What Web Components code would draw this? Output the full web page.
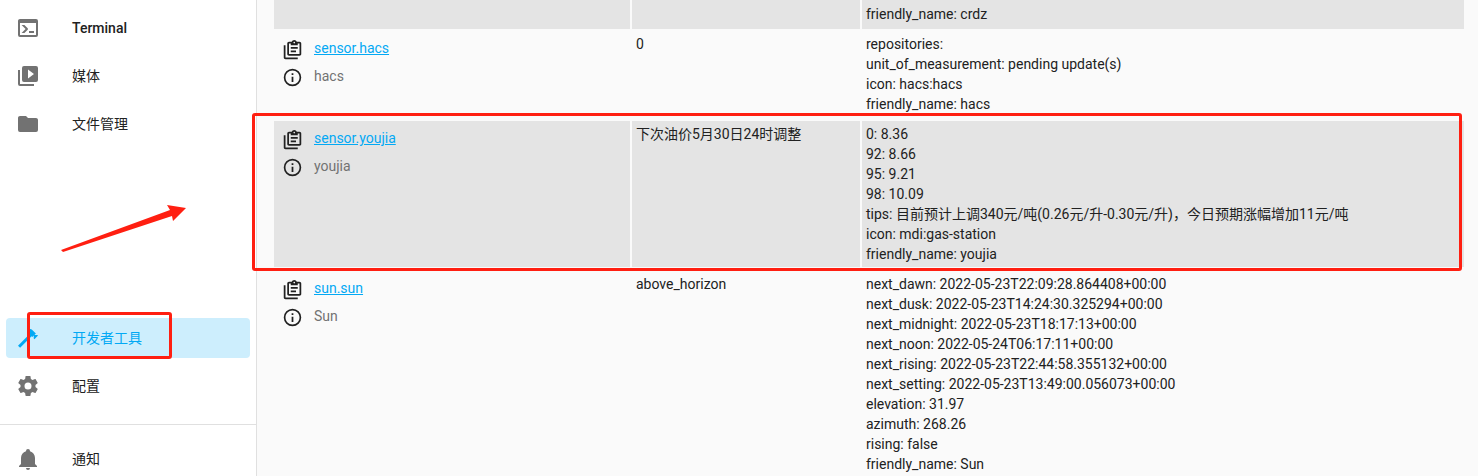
<!DOCTYPE html>
<html lang="zh">
<head>
<meta charset="utf-8">
<title>开发者工具</title>
<style>
    html, body { margin: 0; height: 100%; overflow: hidden; }
    body { font: 14px/20px Roboto, "Noto Sans CJK SC", sans-serif; color: #212121; background: #fafafa; }
</style>
</head>
<body>
<ha-app>
    <ha-sidebar slot="sidebar">
        <nav-item icon="console" medium>Terminal</nav-item>
        <nav-item icon="media">媒体</nav-item>
        <nav-item icon="folder">文件管理</nav-item>
        <nav-item icon="hammer" selected style="margin-top:174px">开发者工具</nav-item>
        <nav-item icon="cog">配置</nav-item>
        <nav-divider></nav-divider>
        <nav-item icon="bell">通知</nav-item>
    </ha-sidebar>

    <state-row class="cut">
        <div>friendly_name: crdz</div>
    </state-row>
    <state-row entity="sensor.hacs" name="hacs" state="0">
        <div>repositories:</div>
        <div>unit_of_measurement: pending update(s)</div>
        <div>icon: hacs:hacs</div>
        <div>friendly_name: hacs</div>
    </state-row>
    <state-row entity="sensor.youjia" name="youjia" state="下次油价5月30日24时调整" marked>
        <div>0: 8.36</div>
        <div>92: 8.66</div>
        <div>95: 9.21</div>
        <div>98: 10.09</div>
        <div>tips: 目前预计上调340元/吨(0.26元/升-0.30元/升)，今日预期涨幅增加11元/吨</div>
        <div>icon: mdi:gas-station</div>
        <div>friendly_name: youjia</div>
    </state-row>
    <state-row entity="sun.sun" name="Sun" state="above_horizon">
        <div>next_dawn: 2022-05-23T22:09:28.864408+00:00</div>
        <div>next_dusk: 2022-05-23T14:24:30.325294+00:00</div>
        <div>next_midnight: 2022-05-23T18:17:13+00:00</div>
        <div>next_noon: 2022-05-24T06:17:11+00:00</div>
        <div>next_rising: 2022-05-23T22:44:58.355132+00:00</div>
        <div>next_setting: 2022-05-23T13:49:00.056073+00:00</div>
        <div>elevation: 31.97</div>
        <div>azimuth: 268.26</div>
        <div>rising: false</div>
        <div>friendly_name: Sun</div>
    </state-row>

    <red-marks slot="marks"></red-marks>
</ha-app>

<script>
    // mdi paths
    const ICONS = {
        console: 'M20,19V7H4V19H20M20,3A2,2 0 0,1 22,5V19A2,2 0 0,1 20,21H4A2,2 0 0,1 2,19V5C2,3.89 2.9,3 4,3H20M13,17V15H18V17H13M9.58,13L5.57,9H8.4L11.7,12.3C12.09,12.69 12.09,13.33 11.7,13.72L8.42,17H5.59L9.58,13Z',
        media: 'M4,6H2V20A2,2 0 0,0 4,22H18V20H4V6M20,2H8A2,2 0 0,0 6,4V16A2,2 0 0,0 8,18H20A2,2 0 0,0 22,16V4A2,2 0 0,0 20,2M12,14.5V5.5L18,10L12,14.5Z',
        folder: 'M10,4H4C2.89,4 2,4.89 2,6V18A2,2 0 0,0 4,20H20A2,2 0 0,0 22,18V8C22,6.89 21.1,6 20,6H12L10,4Z',
        hammer: 'M2 19.63L13.43 8.2L12.72 7.5L14.14 6.07L12 3.89C13.2 2.7 15.09 2.7 16.27 3.89L19.87 7.5L18.45 8.91H21.29L22 9.62L18.45 13.21L17.74 12.5V9.62L16.27 11.04L15.56 10.33L4.13 21.76L2 19.63Z',
        cog: 'M12,15.5A3.5,3.5 0 0,1 8.5,12A3.5,3.5 0 0,1 12,8.5A3.5,3.5 0 0,1 15.5,12A3.5,3.5 0 0,1 12,15.5M19.43,12.97C19.47,12.65 19.5,12.33 19.5,12C19.5,11.67 19.47,11.34 19.43,11L21.54,9.37C21.73,9.22 21.78,8.95 21.66,8.73L19.66,5.27C19.54,5.05 19.27,4.96 19.05,5.05L16.56,6.05C16.04,5.66 15.5,5.32 14.87,5.07L14.5,2.42C14.46,2.18 14.25,2 14,2H10C9.75,2 9.54,2.18 9.5,2.42L9.13,5.07C8.5,5.32 7.96,5.66 7.44,6.05L4.95,5.05C4.73,4.96 4.46,5.05 4.34,5.27L2.34,8.73C2.21,8.95 2.27,9.22 2.46,9.37L4.57,11C4.53,11.34 4.5,11.67 4.5,12C4.5,12.33 4.53,12.65 4.57,12.97L2.46,14.63C2.27,14.78 2.21,15.05 2.34,15.27L4.34,18.73C4.46,18.95 4.73,19.03 4.95,18.95L7.44,17.94C7.96,18.34 8.5,18.68 9.13,18.93L9.5,21.58C9.54,21.82 9.75,22 10,22H14C14.25,22 14.46,21.82 14.5,21.58L14.87,18.93C15.5,18.67 16.04,18.34 16.56,17.94L19.05,18.95C19.27,19.03 19.54,18.95 19.66,18.73L21.66,15.27C21.78,15.05 21.73,14.78 21.54,14.63L19.43,12.97Z',
        bell: 'M21,19V20H3V19L5,17V11C5,7.9 7.03,5.17 10,4.29C10,4.19 10,4.1 10,4A2,2 0 0,1 12,2A2,2 0 0,1 14,4C14,4.1 14,4.19 14,4.29C16.97,5.17 19,7.9 19,11V17L21,19M14,21A2,2 0 0,1 12,23A2,2 0 0,1 10,21',
        clipboard: 'M4 7V21H18V23H4C2.9 23 2 22.1 2 21V7H4M20 3C21.1 3 22 3.9 22 5V17C22 18.1 21.1 19 20 19H8C6.9 19 6 18.1 6 17V5C6 3.9 6.9 3 8 3H11.18C11.6 1.84 12.7 1 14 1C15.3 1 16.4 1.84 16.82 3H20M14 3C13.45 3 13 3.45 13 4C13 4.55 13.45 5 14 5C14.55 5 15 4.55 15 4C15 3.45 14.55 3 14 3M10 7V5H8V17H20V5H18V7H10M18 11H10V9H18V11M16 15H10V13H16V15Z',
        info: 'M11,9H13V7H11M12,20C7.59,20 4,16.41 4,12C4,7.59 7.59,4 12,4C16.41,4 20,7.59 20,12C20,16.41 16.41,20 12,20M12,2A10,10 0 0,0 2,12A10,10 0 0,0 12,22A10,10 0 0,0 22,12A10,10 0 0,0 12,2M11,17H13V11H11V17Z'
    };

    function iconSvg(name) {
        return `<svg viewBox="0 0 24 24" width="24" height="24" fill="currentColor" aria-hidden="true"><path d="${ICONS[name]}"/></svg>`;
    }

    class HaApp extends HTMLElement {
        constructor() {
            super();
            this.attachShadow({ mode: "open" });
            this.shadowRoot.innerHTML = `
                <style>
                    :host { display: grid; grid-template-columns: 257px 1fr; height: 100vh; overflow: hidden; position: relative; }
                    main { padding-left: 17px; min-width: 0; }
                </style>
                <slot name="sidebar"></slot>
                <main><slot></slot></main>
                <slot name="marks"></slot>
            `;
        }
    }

    class HaSidebar extends HTMLElement {
        constructor() {
            super();
            this.attachShadow({ mode: "open" });
            this.shadowRoot.innerHTML = `
                <style>
                    :host { display: block; box-sizing: border-box; height: 100vh; overflow: hidden; padding-top: 8px; background: #fff; border-right: 1px solid #e0e0e0; }
                </style>
                <slot></slot>
            `;
        }
    }

    class NavItem extends HTMLElement {
        constructor() {
            super();
            this.attachShadow({ mode: "open" });
        }

        connectedCallback() {
            this.shadowRoot.innerHTML = `
                <style>
                    :host { display: flex; align-items: center; height: 40px; margin: 0 6px 8px; padding-left: 10px; border-radius: 4px; color: #212121; }
                    :host([medium]) { font-weight: 500; }
                    :host([selected]) { background: #cdeefd; color: #03a9f4; }
                    .icon { display: flex; width: 24px; height: 24px; margin-right: 32px; color: #727272; }
                    :host([selected]) .icon { color: #03a9f4; }
                </style>
                <span class="icon">${iconSvg(this.getAttribute("icon"))}</span>
                <slot></slot>
            `;
        }
    }

    class NavDivider extends HTMLElement {
        constructor() {
            super();
            this.attachShadow({ mode: "open" });
            this.shadowRoot.innerHTML = `<style>:host { display: block; height: 1px; margin: 18px 0 14px; background: #e0e0e0; }</style>`;
        }
    }

    class StateRow extends HTMLElement {
        constructor() {
            super();
            this.attachShadow({ mode: "open" });
        }

        connectedCallback() {
            const entity = this.getAttribute("entity");
            const first = entity ? `
                <div class="line"><span class="ico">${iconSvg("clipboard")}</span><a href="#">${entity}</a></div>
                <div class="line"><span class="ico">${iconSvg("info")}</span><span class="name">${this.getAttribute("name")}</span></div>
            ` : "";
            this.shadowRoot.innerHTML = `
                <style>
                    :host { display: grid; grid-template-columns: 356px 228px 602px; column-gap: 2px; margin-bottom: 4px; }
                    :host(.cut) { height: 29px; margin-bottom: 2px; }
                    :host(.cut) .attrs { padding-top: 4px; }
                    .cell { padding: 3px 4px; }
                    :host(.cut) .cell, :host([marked]) .cell { background: #e4e4e4; }
                    .entity { padding: 6px 0 0 6px; }
                    .line { display: flex; align-items: center; gap: 10px; height: 24px; margin-bottom: 4px; }
                    .ico { display: flex; flex: none; align-items: center; justify-content: center; width: 24px; height: 24px; color: #212121; }
                    .ico svg { width: 21px; height: 21px; }
                    a { color: #03a9f4; }
                    a, .name { position: relative; top: -1px; }
                    .name { color: #727272; }
                </style>
                <div class="cell entity">${first}</div>
                <div class="cell">${this.getAttribute("state") || ""}</div>
                <div class="cell attrs"><slot></slot></div>
            `;
        }
    }

    // the red annotations drawn on top of the screenshot
    class RedMarks extends HTMLElement {
        constructor() {
            super();
            this.attachShadow({ mode: "open" });
            this.shadowRoot.innerHTML = `
                <style>
                    :host { position: absolute; inset: 0; pointer-events: none; }
                    .box { position: absolute; box-sizing: border-box; border: 3px solid #ff1f11; border-radius: 3px; }
                    svg { position: absolute; left: 0; top: 0; }
                </style>
                <div class="box" style="left:252px;top:113px;width:1210px;height:158px"></div>
                <div class="box" style="left:27px;top:312px;width:145px;height:47px"></div>
                <svg width="260" height="300"><polygon fill="#ff1f11" points="61,250 170,210 167,205 186,208 173,221 172,216 63,252"/></svg>
            `;
        }
    }

    customElements.define("ha-app", HaApp);
    customElements.define("ha-sidebar", HaSidebar);
    customElements.define("nav-item", NavItem);
    customElements.define("nav-divider", NavDivider);
    customElements.define("state-row", StateRow);
    customElements.define("red-marks", RedMarks);
</script>
</body>
</html>
